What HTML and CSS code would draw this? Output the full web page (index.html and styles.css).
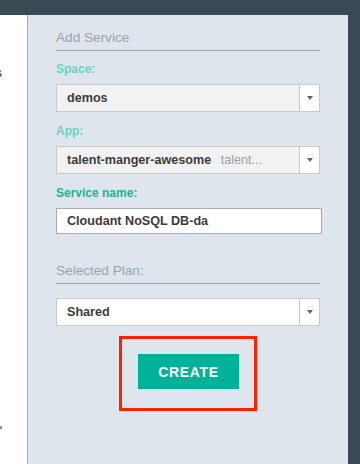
FILE: index.html
```html
<!DOCTYPE html>
<html lang="en">
<head>
  <meta charset="UTF-8">
  <meta name="viewport" content="width=device-width, initial-scale=1.0">
  <title>Add Service</title>
  <link rel="stylesheet" href="styles.css">
</head>
<body>
  <div class="topbar"></div>
  <div class="main">
    <!-- cut-off content of the page behind the panel -->
    <aside class="sidebar">
      <span class="sidebar-text">s</span>
      <span class="sidebar-dot"></span>
    </aside>

    <section class="panel">
      <h2 class="panel-heading">Add Service</h2>

      <div class="field">
        <label class="field-label field-label-muted">Space:</label>
        <div class="select select-disabled">
          <span class="select-value">demos</span>
          <span class="select-toggle"></span>
        </div>
      </div>

      <div class="field">
        <label class="field-label field-label-muted">App:</label>
        <div class="select select-disabled">
          <span class="select-value">talent-manger-awesome <span class="select-hint">talent...</span></span>
          <span class="select-toggle"></span>
        </div>
      </div>

      <div class="field">
        <label class="field-label">Service name:</label>
        <input class="text-input" type="text" value="Cloudant NoSQL DB-da">
      </div>

      <h2 class="panel-heading panel-heading-plan">Selected Plan:</h2>

      <div class="select select-plan">
        <span class="select-value">Shared</span>
        <span class="select-toggle"></span>
      </div>

      <div class="create-row">
        <div class="create-highlight">
          <button class="create-btn" type="button">CREATE</button>
        </div>
      </div>
    </section>
  </div>
</body>
</html>
```

FILE: styles.css
```css
body {
  margin: 0;
  width: 360px;
  height: 464px;
  overflow: hidden;
  background-color: #3a4a55;
  font-family: "Liberation Sans", Arial, sans-serif;
}
.topbar {
  height: 15px;
}
.main {
  display: flex;
  height: 449px;
}
.sidebar {
  width: 27px;
  background-color: #fff;
  border-right: 1px solid #a4acb2;
  padding-top: 50px;
  overflow: hidden;
}
.sidebar-text {
  display: block;
  margin-left: -4.5px;
  font-size: 13px;
  line-height: 16px;
  color: #2c3a46;
}
.sidebar-dot {
  display: block;
  width: 2px;
  height: 3px;
  margin-top: 345px;
  background-color: #8197a8;
}
.panel {
  width: 320px;
  box-sizing: border-box;
  padding: 15px 28px 0 28px;
  background-color: #dfe5ec;
}
.panel-heading {
  margin: 0;
  padding-bottom: 4px;
  width: 264px;
  border-bottom: 1px solid #9ca6ae;
  font-size: 13.6px;
  font-weight: normal;
  line-height: 16px;
  color: #98a3ad;
}
.panel-heading-plan {
  margin-top: 29px;
}
.field {
  margin-top: 12px;
}
.field:first-of-type {
  margin-top: 11px;
}
.field-label {
  display: block;
  margin-bottom: 8px;
  font-size: 12px;
  font-weight: bold;
  line-height: 14px;
  color: #1fb294;
}
.field-label-muted {
  color: #6bd2bf;
}
.select {
  display: flex;
  width: 264px;
  height: 28px;
  box-sizing: border-box;
  border: 1px solid #c6cacd;
  background-color: #fff;
}
.select-disabled {
  background-color: #f2f2f2;
}
.select-value {
  flex: 1;
  padding-left: 10px;
  font-size: 12.6px;
  font-weight: bold;
  line-height: 26px;
  color: #3c3c3c;
  white-space: nowrap;
  overflow: hidden;
}
.select-hint {
  margin-left: 6px;
  font-weight: normal;
  color: #9b9b9b;
}
.select-toggle {
  width: 20px;
  box-sizing: border-box;
  border-left: 1px solid #c6cacd;
  background-color: #fff;
  display: flex;
  align-items: center;
  justify-content: center;
}
.select-toggle::after {
  content: "";
  border-left: 3.5px solid transparent;
  border-right: 3.5px solid transparent;
  border-top: 4px solid #626262;
}
.select-plan {
  margin-top: 14px;
}
.text-input {
  display: block;
  width: 266px;
  height: 26px;
  box-sizing: border-box;
  margin: 0;
  padding: 0 0 0 10px;
  border: 1px solid #acacac;
  background-color: #fff;
  font-family: "Liberation Sans", Arial, sans-serif;
  font-size: 12.6px;
  font-weight: bold;
  color: #3c3c3c;
  outline: none;
}
.create-row {
  display: flex;
  justify-content: center;
  width: 264px;
  margin-top: 10px;
}
.create-highlight {
  border: 3px solid #ff2200;
  padding: 15px 15px 19px 16px;
}
.create-btn {
  display: block;
  width: 101px;
  height: 35px;
  margin: 0;
  padding: 0;
  border: none;
  background-color: #00b398;
  color: #fff;
  font-family: "Liberation Sans", Arial, sans-serif;
  font-size: 14px;
  font-weight: bold;
  letter-spacing: 0.7px;
}
```
